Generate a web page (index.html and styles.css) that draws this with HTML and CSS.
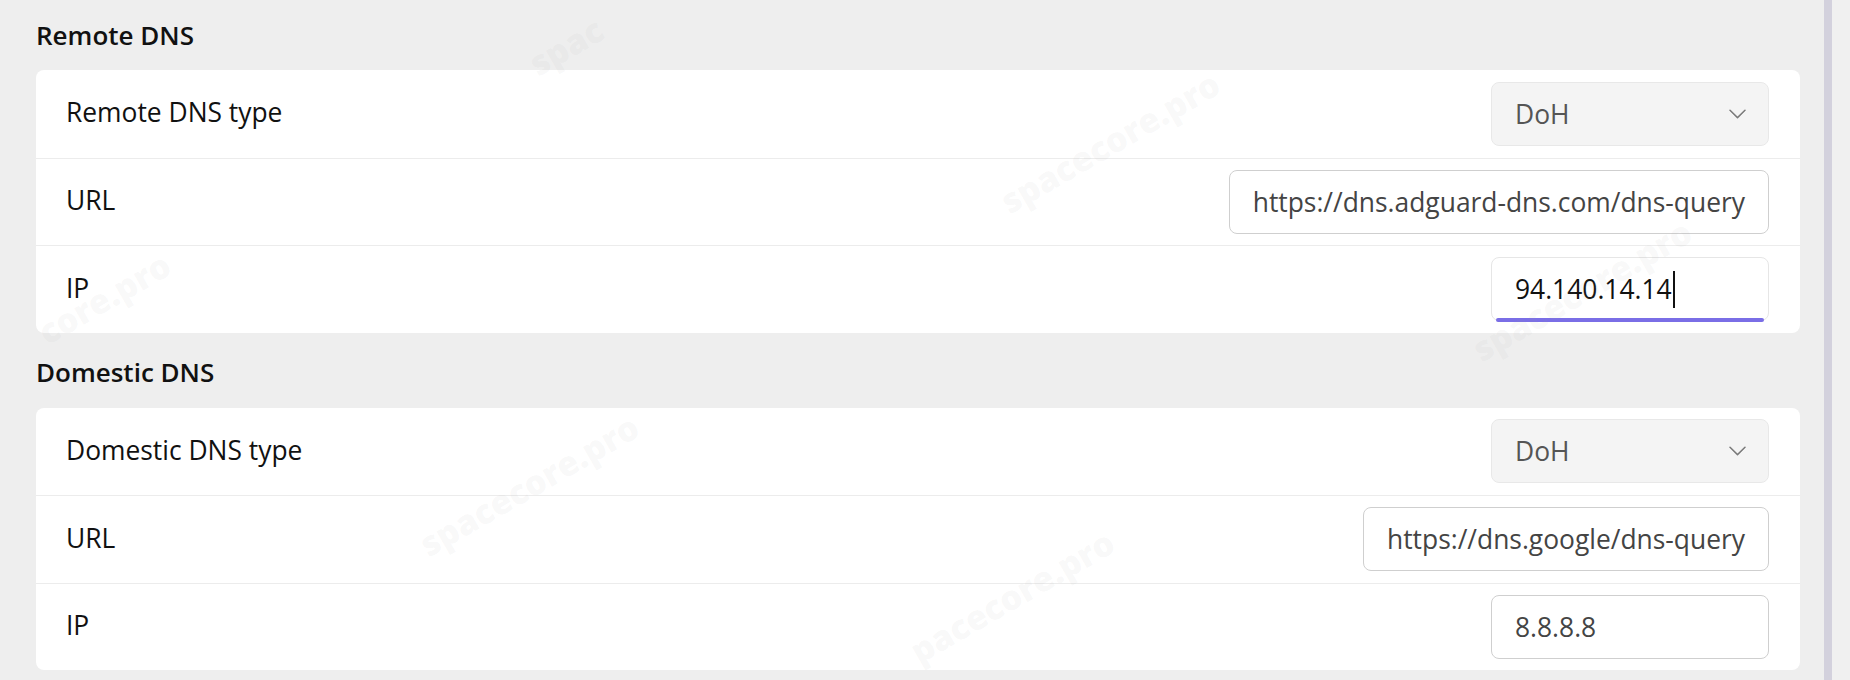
FILE: index.html
```html
<!DOCTYPE html>
<html lang="en">
<head>
<meta charset="utf-8">
<title>DNS settings</title>
<link rel="stylesheet" href="styles.css">
</head>
<body>
<div class="page">
  <main class="content">
    <section class="group">
      <h2 class="group-title">Remote DNS</h2>
      <div class="card">
        <div class="row">
          <span class="label">Remote DNS type</span>
          <div class="select">
            <span>DoH</span>
            <svg class="chevron" width="17" height="10" viewBox="0 0 17 10" aria-hidden="true"><path d="M1 1.2 L8.5 8.6 L16 1.2" fill="none" stroke="#7a7a7a" stroke-width="1.5" stroke-linecap="round" stroke-linejoin="round"/></svg>
          </div>
        </div>
        <div class="row">
          <span class="label">URL</span>
          <div class="field">https://dns.adguard-dns.com/dns-query</div>
        </div>
        <div class="row">
          <span class="label">IP</span>
          <div class="field focused"><span class="value">94.140.14.14</span><span class="caret"></span></div>
        </div>
      </div>
    </section>
    <section class="group">
      <h2 class="group-title">Domestic DNS</h2>
      <div class="card">
        <div class="row">
          <span class="label">Domestic DNS type</span>
          <div class="select">
            <span>DoH</span>
            <svg class="chevron" width="17" height="10" viewBox="0 0 17 10" aria-hidden="true"><path d="M1 1.2 L8.5 8.6 L16 1.2" fill="none" stroke="#7a7a7a" stroke-width="1.5" stroke-linecap="round" stroke-linejoin="round"/></svg>
          </div>
        </div>
        <div class="row">
          <span class="label">URL</span>
          <div class="field">https://dns.google/dns-query</div>
        </div>
        <div class="row">
          <span class="label">IP</span>
          <div class="field">8.8.8.8</div>
        </div>
      </div>
    </section>
  </main>
  <div class="scrollbar"></div>
  <div class="gutter"></div>

  <div class="watermark wm1">spac</div>
  <div class="watermark wm2">spacecore.pro</div>
  <div class="watermark wm3">spacecore.pro</div>
  <div class="watermark wm4">core.pro</div>
  <div class="watermark wm5">spacecore.pro</div>
  <div class="watermark wm6">pacecore.pro</div>
</div>
</body>
</html>
```

FILE: styles.css
```css
html, body {
  margin: 0;
  padding: 0;
}

body {
  background: #eeeeee;
  font-family: "Open Sans", "Noto Sans", sans-serif;
  color: #111111;
}

.page {
  position: relative;
  display: flex;
  width: 1850px;
  height: 680px;
  overflow: hidden;
}

.content {
  flex: 1;
  padding: 0 24px 0 36px;
  background: #eeeeee;
}

.scrollbar {
  width: 8px;
  background: #d3d1dd;
}

.gutter {
  width: 18px;
  background: #f0f0f0;
}

.group-title {
  margin: 0;
  padding: 21.5px 0 17.5px;
  font-size: 26px;
  line-height: 36px;
  font-weight: 600;
  color: #111111;
}

.group:first-child .group-title {
  padding-top: 16.5px;
}

.card {
  background: #ffffff;
  border-radius: 8px;
  overflow: hidden;
}

.row {
  display: flex;
  align-items: center;
  justify-content: space-between;
  height: 87.5px;
  box-sizing: border-box;
  padding: 0 31px 0 30px;
}

.row + .row {
  border-top: 1.5px solid #ececec;
}

.label {
  font-size: 26.4px;
  color: #111111;
  margin-bottom: 3px;
}

.select,
.field {
  display: flex;
  align-items: center;
  box-sizing: border-box;
  height: 64px;
  min-width: 278px;
  border-radius: 8px;
  font-size: 26.4px;
  white-space: nowrap;
}

.select {
  justify-content: space-between;
  padding: 0 22px 0 23px;
  background: #f4f4f4;
  border: 1px solid #e8e8e8;
  color: #555555;
}

.chevron {
  display: block;
}

.field {
  position: relative;
  padding: 0 23px;
  background: #ffffff;
  border: 1.5px solid #cfcfcf;
  color: #444444;
}

.field.focused {
  border-color: #e6e6e6;
  color: #111111;
}

.field.focused::after {
  content: "";
  position: absolute;
  left: 4px;
  right: 4px;
  bottom: -1.5px;
  height: 4px;
  border-radius: 2px;
  background: #7a6ee6;
}

.caret {
  display: inline-block;
  width: 2px;
  height: 37px;
  margin-left: 1px;
  background: #111111;
}

.watermark {
  position: absolute;
  font-family: "Open Sans", sans-serif;
  font-weight: 800;
  font-size: 34px;
  white-space: nowrap;
  color: rgba(160, 160, 160, 0.08);
  transform: translate(-50%, -50%) rotate(-30deg);
  pointer-events: none;
}

.wm1 { left: 566px; top: 46px; }
.wm2 { left: 1110px; top: 142px; }
.wm3 { left: 1582px; top: 290px; }
.wm4 { left: 104px; top: 298px; }
.wm5 { left: 529px; top: 485px; }
.wm6 { left: 1012px; top: 596px; }
```
